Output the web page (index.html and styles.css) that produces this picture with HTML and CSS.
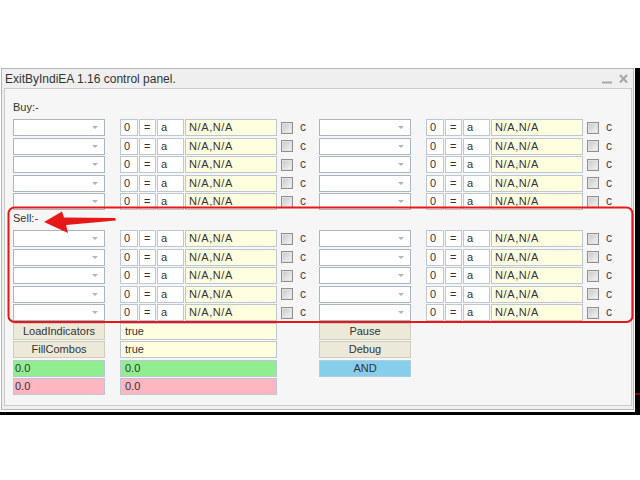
FILE: index.html
```html
<!DOCTYPE html>
<html>
<head>
<meta charset="utf-8">
<link rel="stylesheet" href="styles.css">
</head>
<body>
<div class="stage">
  <div class="window">
    <div class="titlebar">
      <span class="title">ExitByIndiEA 1.16 control panel.</span>
      <svg class="controls" width="30" height="12" viewBox="0 0 30 12">
        <line x1="3" y1="9.5" x2="13" y2="9.5" stroke="#a8a8a8" stroke-width="2"/>
        <line x1="21" y1="2" x2="28" y2="9.5" stroke="#a8a8a8" stroke-width="2.2"/>
        <line x1="28" y1="2" x2="21" y2="9.5" stroke="#a8a8a8" stroke-width="2.2"/>
      </svg>
    </div>
    <div class="panel">
      <div class="label">Buy:-</div>
      <div class="row">
        <div class="half"><div class="combo"><span class="arrow"></span></div><div class="box num">0</div><div class="box eq">=</div><div class="box a">a</div><div class="box na">N/A,N/A</div><div class="check"></div><div class="c">c</div></div>
        <div class="half"><div class="combo"><span class="arrow"></span></div><div class="box num">0</div><div class="box eq">=</div><div class="box a">a</div><div class="box na">N/A,N/A</div><div class="check"></div><div class="c">c</div></div>
      </div>
      <div class="row">
        <div class="half"><div class="combo"><span class="arrow"></span></div><div class="box num">0</div><div class="box eq">=</div><div class="box a">a</div><div class="box na">N/A,N/A</div><div class="check"></div><div class="c">c</div></div>
        <div class="half"><div class="combo"><span class="arrow"></span></div><div class="box num">0</div><div class="box eq">=</div><div class="box a">a</div><div class="box na">N/A,N/A</div><div class="check"></div><div class="c">c</div></div>
      </div>
      <div class="row">
        <div class="half"><div class="combo"><span class="arrow"></span></div><div class="box num">0</div><div class="box eq">=</div><div class="box a">a</div><div class="box na">N/A,N/A</div><div class="check"></div><div class="c">c</div></div>
        <div class="half"><div class="combo"><span class="arrow"></span></div><div class="box num">0</div><div class="box eq">=</div><div class="box a">a</div><div class="box na">N/A,N/A</div><div class="check"></div><div class="c">c</div></div>
      </div>
      <div class="row">
        <div class="half"><div class="combo"><span class="arrow"></span></div><div class="box num">0</div><div class="box eq">=</div><div class="box a">a</div><div class="box na">N/A,N/A</div><div class="check"></div><div class="c">c</div></div>
        <div class="half"><div class="combo"><span class="arrow"></span></div><div class="box num">0</div><div class="box eq">=</div><div class="box a">a</div><div class="box na">N/A,N/A</div><div class="check"></div><div class="c">c</div></div>
      </div>
      <div class="row">
        <div class="half"><div class="combo"><span class="arrow"></span></div><div class="box num">0</div><div class="box eq">=</div><div class="box a">a</div><div class="box na">N/A,N/A</div><div class="check"></div><div class="c">c</div></div>
        <div class="half"><div class="combo"><span class="arrow"></span></div><div class="box num">0</div><div class="box eq">=</div><div class="box a">a</div><div class="box na">N/A,N/A</div><div class="check"></div><div class="c">c</div></div>
      </div>
      <div class="label">Sell:-</div>
      <div class="row">
        <div class="half"><div class="combo"><span class="arrow"></span></div><div class="box num">0</div><div class="box eq">=</div><div class="box a">a</div><div class="box na">N/A,N/A</div><div class="check"></div><div class="c">c</div></div>
        <div class="half"><div class="combo"><span class="arrow"></span></div><div class="box num">0</div><div class="box eq">=</div><div class="box a">a</div><div class="box na">N/A,N/A</div><div class="check"></div><div class="c">c</div></div>
      </div>
      <div class="row">
        <div class="half"><div class="combo"><span class="arrow"></span></div><div class="box num">0</div><div class="box eq">=</div><div class="box a">a</div><div class="box na">N/A,N/A</div><div class="check"></div><div class="c">c</div></div>
        <div class="half"><div class="combo"><span class="arrow"></span></div><div class="box num">0</div><div class="box eq">=</div><div class="box a">a</div><div class="box na">N/A,N/A</div><div class="check"></div><div class="c">c</div></div>
      </div>
      <div class="row">
        <div class="half"><div class="combo"><span class="arrow"></span></div><div class="box num">0</div><div class="box eq">=</div><div class="box a">a</div><div class="box na">N/A,N/A</div><div class="check"></div><div class="c">c</div></div>
        <div class="half"><div class="combo"><span class="arrow"></span></div><div class="box num">0</div><div class="box eq">=</div><div class="box a">a</div><div class="box na">N/A,N/A</div><div class="check"></div><div class="c">c</div></div>
      </div>
      <div class="row">
        <div class="half"><div class="combo"><span class="arrow"></span></div><div class="box num">0</div><div class="box eq">=</div><div class="box a">a</div><div class="box na">N/A,N/A</div><div class="check"></div><div class="c">c</div></div>
        <div class="half"><div class="combo"><span class="arrow"></span></div><div class="box num">0</div><div class="box eq">=</div><div class="box a">a</div><div class="box na">N/A,N/A</div><div class="check"></div><div class="c">c</div></div>
      </div>
      <div class="row">
        <div class="half"><div class="combo"><span class="arrow"></span></div><div class="box num">0</div><div class="box eq">=</div><div class="box a">a</div><div class="box na">N/A,N/A</div><div class="check"></div><div class="c">c</div></div>
        <div class="half"><div class="combo"><span class="arrow"></span></div><div class="box num">0</div><div class="box eq">=</div><div class="box a">a</div><div class="box na">N/A,N/A</div><div class="check"></div><div class="c">c</div></div>
      </div>
      <div class="row">
        <div class="half"><div class="btn">LoadIndicators</div><div class="box wide">true</div></div>
        <div class="half"><div class="btn">Pause</div></div>
      </div>
      <div class="row">
        <div class="half"><div class="btn">FillCombos</div><div class="box wide">true</div></div>
        <div class="half"><div class="btn">Debug</div></div>
      </div>
      <div class="row">
        <div class="half"><div class="box small green">0.0</div><div class="box wide green">0.0</div></div>
        <div class="half"><div class="btn blue">AND</div></div>
      </div>
      <div class="row">
        <div class="half"><div class="box small pink">0.0</div><div class="box wide pink">0.0</div></div>
        <div class="half"></div>
      </div>
    </div>
  </div>
  <div class="strip"><div class="mark"></div></div>
</div>
<div class="floor"></div>
<svg class="annot" width="640" height="480" viewBox="0 0 640 480">
  <rect x="8.5" y="207.5" width="624" height="114.5" rx="6" ry="6" fill="none" stroke="#e81818" stroke-width="2"/>
  <polygon points="44,222 62,211.5 64,217.5 115,218 116,220.5 66,225 68,233" fill="#e81818"/>
</svg>
</body>
</html>
```

FILE: styles.css
```css
html, body {
  margin: 0;
  padding: 0;
  background: #ffffff;
}
body {
  width: 640px;
  height: 480px;
  font-family: "Liberation Sans", Arial, sans-serif;
  font-size: 11px;
  color: #333333;
  position: relative;
  overflow: hidden;
}
.stage {
  display: flex;
  align-items: flex-start;
  padding-top: 68px;
  padding-bottom: 2px;
}
.window {
  margin-left: 1px;
  width: 633px;
  box-sizing: border-box;
  border: 1px solid #b6b6b6;
  background: #efefef;
  padding: 0 1px 3px 2px;
}
.titlebar {
  display: flex;
  align-items: center;
  height: 19px;
  padding: 0 3px 0 1px;
}
.title {
  font-size: 12px;
  line-height: 17px;
  padding-top: 2px;
  color: #333333;
}
.controls {
  margin-left: auto;
}
.panel {
  border: 1px solid #cbcbcb;
  background: #f6f6f6;
  display: flex;
  flex-direction: column;
  gap: 1.5px;
  padding: 11.5px 0 10px 8px;
}
.label {
  height: 17px;
  line-height: 12px;
  padding-top: 0.5px;
  box-sizing: border-box;
  color: #333333;
}
.row {
  display: flex;
  height: 17px;
}
.half {
  width: 306px;
  display: flex;
  align-items: center;
}
.combo {
  width: 92px;
  height: 17px;
  box-sizing: border-box;
  border: 1px solid #a9b5c1;
  background: #ffffff;
  margin-right: 15px;
  display: flex;
  justify-content: flex-end;
  align-items: center;
  padding-right: 6px;
}
.arrow {
  width: 0;
  height: 0;
  border-left: 3px solid transparent;
  border-right: 3px solid transparent;
  border-top: 3px solid #b4b4b4;
}
.box {
  height: 17px;
  box-sizing: border-box;
  border: 1px solid #bcc7d2;
  background: #ffffff;
  line-height: 15px;
  padding-left: 3px;
  margin-right: 1px;
  white-space: nowrap;
  overflow: hidden;
  color: #333333;
}
.num { width: 18px; }
.eq { width: 17px; padding-left: 4px; }
.a { width: 27px; }
.na {
  width: 92px;
  background: #ffffe0;
  margin-right: 4px;
  letter-spacing: 0.6px;
}
.check {
  width: 12px;
  height: 12px;
  box-sizing: border-box;
  border: 1px solid #8f8f8f;
  background: linear-gradient(135deg, #c6c6c6, #f6f6f6);
  box-shadow: inset 0 0 0 1px #e2e2e2;
}
.c {
  margin-left: 7px;
  color: #5a3c3c;
  font-size: 12px;
  line-height: 15px;
}
.btn {
  width: 92px;
  height: 17px;
  box-sizing: border-box;
  margin-right: 15px;
  background: #ece9d8;
  border: 1px solid #d0cdbe;
  text-align: center;
  line-height: 15px;
  color: #333333;
}
.btn.blue {
  background: #87ceeb;
  border-color: #a9cfe0;
}
.wide {
  width: 157px;
  padding-left: 4px;
  background: #ffffe0;
}
.small {
  width: 92px;
  margin-right: 15px;
  padding-left: 1px;
}
.green { background: #90ee90; }
.pink { background: #ffb6c1; }
.strip {
  align-self: stretch;
  margin-left: 1px;
  margin-bottom: -2px;
  width: 5px;
  background: #000000;
}
.mark {
  margin-top: 325px;
  height: 2px;
  background: #8b0000;
}
.floor {
  height: 3px;
  background: #000000;
}
.annot {
  position: absolute;
  left: 0;
  top: 0;
  pointer-events: none;
}
```
